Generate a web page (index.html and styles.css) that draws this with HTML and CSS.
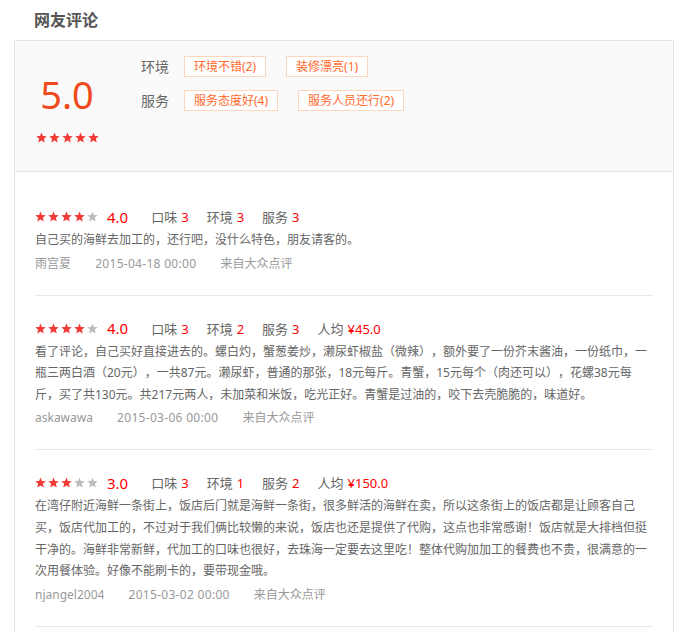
FILE: index.html
```html
<!DOCTYPE html>
<html lang="zh-CN">
<head>
    <meta charset="UTF-8">
    <meta name="viewport" content="width=device-width, initial-scale=1.0">
    <title>网友评论</title>
    <link rel="stylesheet" href="styles.css">
</head>
<body>
    <svg class="defs" width="0" height="0">
        <symbol id="star" viewBox="0 0 24 24">
            <polygon points="12,1 15.1,8.6 23.4,9.2 17.1,14.6 19.1,22.7 12,18.3 4.9,22.7 6.9,14.6 0.6,9.2 8.9,8.6"></polygon>
        </symbol>
    </svg>
    <div class="page">
        <h2 class="title">网友评论</h2>
        <div class="panel">
            <div class="summary">
                <div class="overall">
                    <div class="overall-score">5.0</div>
                    <div class="stars">
                        <svg class="star on"><use href="#star"></use></svg>
                        <svg class="star on"><use href="#star"></use></svg>
                        <svg class="star on"><use href="#star"></use></svg>
                        <svg class="star on"><use href="#star"></use></svg>
                        <svg class="star on"><use href="#star"></use></svg>
                    </div>
                </div>
                <div class="tag-groups">
                    <div class="tag-row">
                        <span class="tag-label">环境</span>
                        <span class="tag">环境不错(2)</span>
                        <span class="tag">装修漂亮(1)</span>
                    </div>
                    <div class="tag-row">
                        <span class="tag-label">服务</span>
                        <span class="tag">服务态度好(4)</span>
                        <span class="tag">服务人员还行(2)</span>
                    </div>
                </div>
            </div>

            <ul class="reviews">
                <li class="review">
                    <div class="review-head">
                        <div class="stars">
                            <svg class="star on"><use href="#star"></use></svg>
                            <svg class="star on"><use href="#star"></use></svg>
                            <svg class="star on"><use href="#star"></use></svg>
                            <svg class="star on"><use href="#star"></use></svg>
                            <svg class="star"><use href="#star"></use></svg>
                        </div>
                        <span class="score">4.0</span>
                        <span class="item">口味<b>3</b></span>
                        <span class="item">环境<b>3</b></span>
                        <span class="item">服务<b>3</b></span>
                    </div>
                    <p class="review-text">自己买的海鲜去加工的，还行吧，没什么特色，朋友请客的。</p>
                    <div class="review-meta">
                        <span>雨宫夏</span>
                        <span class="date">2015-04-18 00:00</span>
                        <span>来自大众点评</span>
                    </div>
                </li>
                <li class="review">
                    <div class="review-head">
                        <div class="stars">
                            <svg class="star on"><use href="#star"></use></svg>
                            <svg class="star on"><use href="#star"></use></svg>
                            <svg class="star on"><use href="#star"></use></svg>
                            <svg class="star on"><use href="#star"></use></svg>
                            <svg class="star"><use href="#star"></use></svg>
                        </div>
                        <span class="score">4.0</span>
                        <span class="item">口味<b>3</b></span>
                        <span class="item">环境<b>2</b></span>
                        <span class="item">服务<b>3</b></span>
                        <span class="item">人均<b>¥45.0</b></span>
                    </div>
                    <p class="review-text">看了评论，自己买好直接进去的。螺白灼，蟹葱姜炒，濑尿虾椒盐（微辣），额外要了一份芥末酱油，一份纸巾，一瓶三两白酒（20元），一共87元。濑尿虾，普通的那张，18元每斤。青蟹，15元每个（肉还可以），花螺38元每斤，买了共130元。共217元两人，未加菜和米饭，吃光正好。青蟹是过油的，咬下去壳脆脆的，味道好。</p>
                    <div class="review-meta">
                        <span>askawawa</span>
                        <span class="date">2015-03-06 00:00</span>
                        <span>来自大众点评</span>
                    </div>
                </li>
                <li class="review">
                    <div class="review-head">
                        <div class="stars">
                            <svg class="star on"><use href="#star"></use></svg>
                            <svg class="star on"><use href="#star"></use></svg>
                            <svg class="star on"><use href="#star"></use></svg>
                            <svg class="star"><use href="#star"></use></svg>
                            <svg class="star"><use href="#star"></use></svg>
                        </div>
                        <span class="score">3.0</span>
                        <span class="item">口味<b>3</b></span>
                        <span class="item">环境<b>1</b></span>
                        <span class="item">服务<b>2</b></span>
                        <span class="item">人均<b>¥150.0</b></span>
                    </div>
                    <p class="review-text">在湾仔附近海鲜一条街上，饭店后门就是海鲜一条街，很多鲜活的海鲜在卖，所以这条街上的饭店都是让顾客自己买，饭店代加工的，不过对于我们俩比较懒的来说，饭店也还是提供了代购，这点也非常感谢！饭店就是大排档但挺干净的。海鲜非常新鲜，代加工的口味也很好，去珠海一定要去这里吃！整体代购加加工的餐费也不贵，很满意的一次用餐体验。好像不能刷卡的，要带现金哦。</p>
                    <div class="review-meta">
                        <span>njangel2004</span>
                        <span class="date">2015-03-02 00:00</span>
                        <span>来自大众点评</span>
                    </div>
                </li>
            </ul>
        </div>
    </div>
</body>
</html>
```

FILE: styles.css
```css
body{
    margin: 0;
    background: #fff;
    font-family: "Noto Sans", "Noto Sans CJK SC", sans-serif;
    color: #666;
    text-spacing-trim: space-all;
}
.defs{
    position: absolute;
}
.page{
    padding: 0 14px;
}
.title{
    margin: 0;
    height: 40px;
    line-height: 40px;
    padding-left: 20px;
    font-size: 16px;
    font-weight: bold;
    color: #555;
}
.panel{
    border: 1px solid #e5e5e5;
}

/* summary */
.summary{
    display: flex;
    box-sizing: border-box;
    height: 131px;
    padding: 15px 20px 0;
    background: #fafafa;
    border-bottom: 1px solid #e5e5e5;
}
.overall{
    width: 64px;
    margin-right: 42px;
    text-align: center;
}
.overall-score{
    margin-top: 18px;
    font-size: 38px;
    line-height: 40px;
    color: #f04b1c;
}
.overall .stars{
    margin-top: 18px;
    justify-content: center;
}
.tag-groups{
    display: flex;
    flex-direction: column;
    gap: 13px;
}
.tag-row{
    display: flex;
    align-items: center;
}
.tag-label{
    font-size: 14px;
    line-height: 21px;
    color: #666;
    margin-right: 15px;
}
.tag{
    box-sizing: border-box;
    height: 21px;
    line-height: 19px;
    padding: 0 9px;
    margin-right: 20px;
    font-size: 12px;
    color: #ff6a2b;
    background: #fff;
    border: 1px solid #fcd6bd;
}

/* stars */
.stars{
    display: flex;
    gap: 2px;
}
.star{
    width: 11px;
    height: 11px;
    fill: #bcbcbc;
}
.star.on{
    fill: #f23a36;
}

/* reviews */
.reviews{
    list-style: none;
    margin: 0;
    padding: 12px 20px 30px;
}
.review{
    padding: 22px 0 21px;
    border-bottom: 1px solid #e8e8e8;
}
.review-head{
    display: flex;
    align-items: center;
    height: 21px;
    margin-bottom: 2px;
}
.score{
    margin: 0 23px 0 9px;
    font-size: 15px;
    color: #f00;
}
.item{
    margin-right: 18px;
    font-size: 13px;
    color: #666;
}
.item b{
    font-weight: normal;
    margin-left: 4px;
    color: #f00;
}
.review-text{
    margin: 0;
    font-size: 12px;
    line-height: 1.8;
    color: #666;
}
.review-meta{
    margin-top: 2px;
    font-size: 12px;
    line-height: 21px;
    color: #999;
}
.review-meta span{
    margin-right: 21px;
}
.review-meta .date{
    letter-spacing: 0.3px;
}
```
